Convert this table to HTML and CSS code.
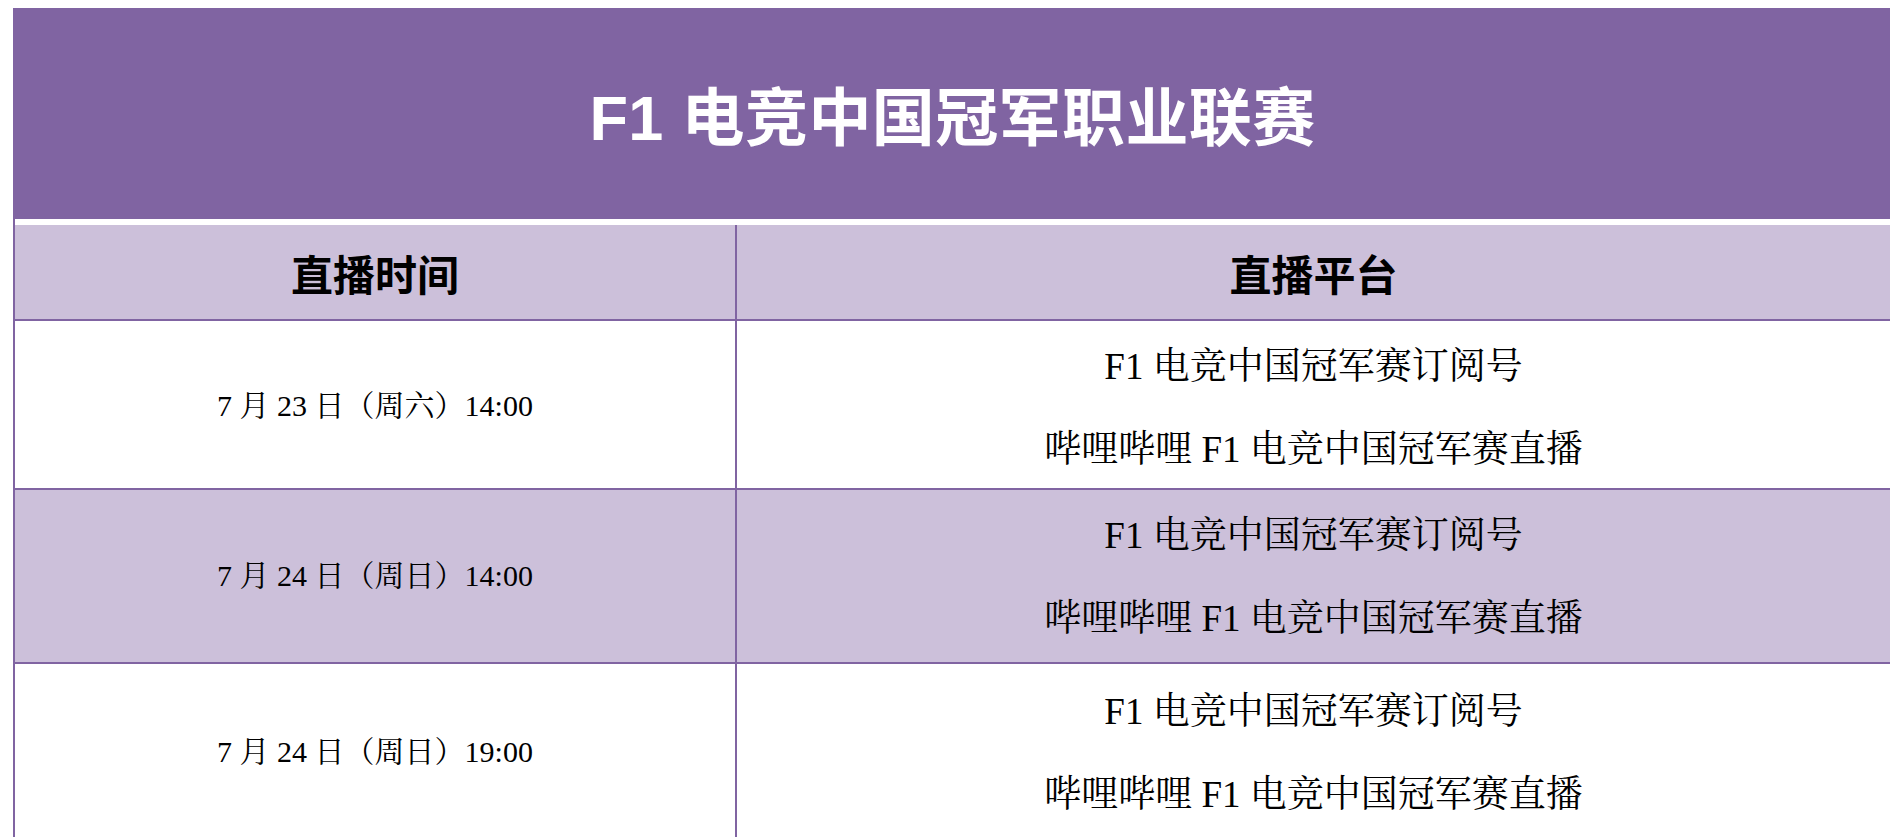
FILE: index.html
```html
<!DOCTYPE html>
<html lang="zh-CN">
<head>
<meta charset="utf-8">
<title>F1 电竞中国冠军职业联赛</title>
<link rel="stylesheet" href="styles.css">
</head>
<body>
<div class="sheet">
  <div class="title">F1 电竞中国冠军职业联赛</div>
  <div class="row head">
    <div class="cell">直播时间</div>
    <div class="cell second">直播平台</div>
  </div>
  <div class="row r1">
    <div class="cell date">7 月 23 日（周六）14:00</div>
    <div class="cell second plat">
      <div class="line">F1 电竞中国冠军赛订阅号</div>
      <div class="line">哔哩哔哩 F1 电竞中国冠军赛直播</div>
    </div>
  </div>
  <div class="row r2 shade">
    <div class="cell date">7 月 24 日（周日）14:00</div>
    <div class="cell second plat">
      <div class="line">F1 电竞中国冠军赛订阅号</div>
      <div class="line">哔哩哔哩 F1 电竞中国冠军赛直播</div>
    </div>
  </div>
  <div class="row r3">
    <div class="cell date">7 月 24 日（周日）19:00</div>
    <div class="cell second plat">
      <div class="line">F1 电竞中国冠军赛订阅号</div>
      <div class="line">哔哩哔哩 F1 电竞中国冠军赛直播</div>
    </div>
  </div>
</div>
</body>
</html>
```

FILE: styles.css
```css
html, body {
  margin: 0;
  padding: 0;
  background: #ffffff;
  overflow: hidden;
}

.sheet {
  margin: 8px 0 0 13px;
  width: 1875px;
  border-left: 2px solid #8064a2;
}

.title {
  height: 211px;
  background: #8064a2;
  color: #ffffff;
  font-family: "Liberation Sans", "Noto Sans CJK SC", sans-serif;
  font-weight: 700;
  font-size: 63px;
  letter-spacing: 0.4px;
  display: flex;
  align-items: center;
  justify-content: center;
  margin-bottom: 6px;
  padding-bottom: 2px;
  box-sizing: border-box;
}

.row {
  display: grid;
  grid-template-columns: 720px 1fr;
  border-bottom: 2px solid #8064a2;
}

.cell {
  display: flex;
  flex-direction: column;
  align-items: center;
  justify-content: center;
  color: #000000;
}

.second {
  border-left: 2px solid #8064a2;
}

.head {
  height: 94px;
  background: #ccc0da;
  font-family: "Liberation Sans", "Noto Sans CJK SC", sans-serif;
  font-weight: 700;
  font-size: 42px;
}

.shade {
  background: #ccc0da;
}

.r1 { height: 167px; }
.r2 { height: 172px; }
.r3 { height: 176px; }

.date {
  font-family: "Liberation Serif", "Noto Serif CJK SC", "Noto Sans CJK SC", serif;
  font-size: 30px;
  padding-bottom: 7px;
}

.plat {
  font-family: "Liberation Serif", "Noto Serif CJK SC", "Noto Sans CJK SC", serif;
  font-size: 37px;
  padding-bottom: 5px;
}

.line {
  height: 83px;
  display: flex;
  align-items: center;
}
```
